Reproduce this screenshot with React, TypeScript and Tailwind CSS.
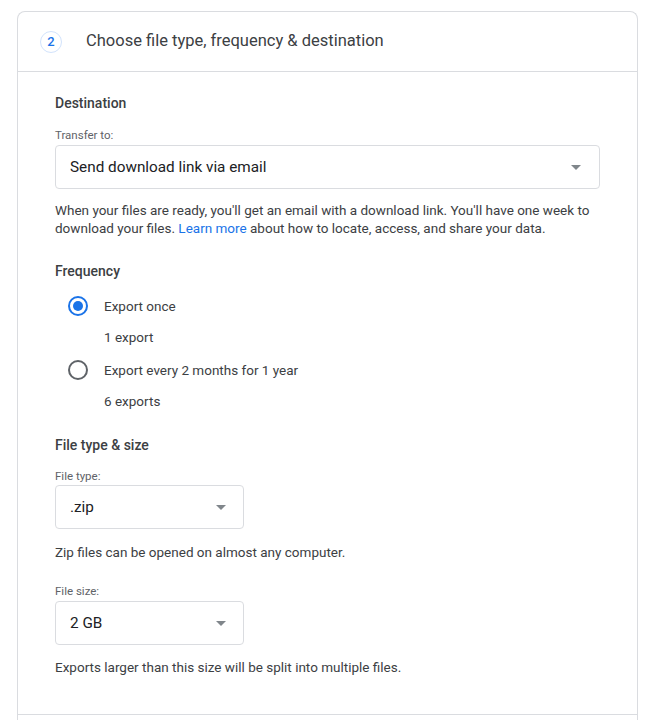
import React, { useState } from 'react';

const Caret: React.FC = () => (
  <svg width="10" height="5" viewBox="0 0 10 5" className="shrink-0">
    <path d="M0 0 L10 0 L5 5 Z" fill="#80868b" />
  </svg>
);

const Select: React.FC<{ value: string; wide?: boolean }> = ({ value, wide }) => (
  <div
    className={`flex h-[44px] items-center justify-between rounded-[4px] border border-[#dadce0] bg-white pl-[14px] ${
      wide ? 'w-full pr-[18px]' : 'w-[189px] pr-[17px]'
    }`}
  >
    <span className="text-[15.3px] text-[#202124]">{value}</span>
    <Caret />
  </div>
);

const Radio: React.FC<{ checked: boolean; label: string; onClick: () => void }> = ({ checked, label, onClick }) => (
  <button onClick={onClick} className="flex h-[20px] items-center text-left">
    <span
      className={`ml-[13px] flex h-[20px] w-[20px] items-center justify-center rounded-full border-2 ${
        checked ? 'border-[#1a73e8]' : 'border-[#5f6368]'
      }`}
    >
      {checked && <span className="h-[10px] w-[10px] rounded-full bg-[#1a73e8]" />}
    </span>
    <span className="ml-[16px] text-[13.5px] leading-[20px] text-[#3c4043]">{label}</span>
  </button>
);

const App: React.FC = () => {
  const [freq, setFreq] = useState<'once' | 'every'>('once');

  return (
    <div
      className="min-h-[720px] overflow-hidden bg-white pl-[17px] pr-[10px] pt-[11px]"
      style={{ fontFamily: 'Roboto, "Liberation Sans", Arial, sans-serif' }}
    >
      <div className="rounded-t-[8px] border border-b-0 border-[#dadce0] bg-white">
        {/* Step header */}
        <div className="flex h-[60px] items-center border-b border-[#dadce0] pl-[22px]">
          <div className="flex h-[22px] w-[22px] items-center justify-center rounded-full border border-[#d2e3fc] text-[13px] font-medium text-[#1a73e8]">
            2
          </div>
          <div className="ml-[24px] text-[16.5px] text-[#3c4043]">Choose file type, frequency &amp; destination</div>
        </div>

        {/* Body */}
        <div className="px-[37px] pb-[38px] pt-[21px]">
          <div className="text-[14px] font-medium leading-[20px] text-[#3c4043]">Destination</div>
          <div className="mt-[14px] text-[11.5px] leading-[16px] text-[#5f6368]">Transfer to:</div>
          <div className="mt-[2px]">
            <Select value="Send download link via email" wide />
          </div>
          <p className="mt-[12px] text-[13.5px] leading-[18px] text-[#3c4043]">
            When your files are ready, you'll get an email with a download link. You'll have one week to download your
            files. <a className="text-[#1a73e8]">Learn more</a> about how to locate, access, and share your data.
          </p>

          <div className="mt-[24px] text-[14px] font-medium leading-[20px] text-[#3c4043]">Frequency</div>
          <div className="mt-[15px] flex flex-col">
            <Radio checked={freq === 'once'} label="Export once" onClick={() => setFreq('once')} />
            <div className="mt-[11px] pl-[49px] text-[13.5px] leading-[20px] text-[#3c4043]">1 export</div>
            <div className="mt-[13px]">
              <Radio checked={freq === 'every'} label="Export every 2 months for 1 year" onClick={() => setFreq('every')} />
            </div>
            <div className="mt-[11px] pl-[49px] text-[13.5px] leading-[20px] text-[#3c4043]">6 exports</div>
          </div>

          <div className="mt-[24px] text-[14px] font-medium leading-[20px] text-[#3c4043]">File type &amp; size</div>
          <div className="mt-[13px] text-[11.5px] leading-[16px] text-[#5f6368]">File type:</div>
          <div className="mt-[1px]">
            <Select value=".zip" />
          </div>
          <p className="mt-[14px] text-[13.5px] leading-[18px] text-[#3c4043]">Zip files can be opened on almost any computer.</p>

          <div className="mt-[22px] text-[11.5px] leading-[16px] text-[#5f6368]">File size:</div>
          <div className="mt-[2px]">
            <Select value="2 GB" />
          </div>
          <p className="mt-[13px] text-[13.5px] leading-[18px] text-[#3c4043]">
            Exports larger than this size will be split into multiple files.
          </p>
        </div>

        <div className="h-[40px] border-t border-[#dadce0]" />
      </div>
    </div>
  );
};

export default App;
